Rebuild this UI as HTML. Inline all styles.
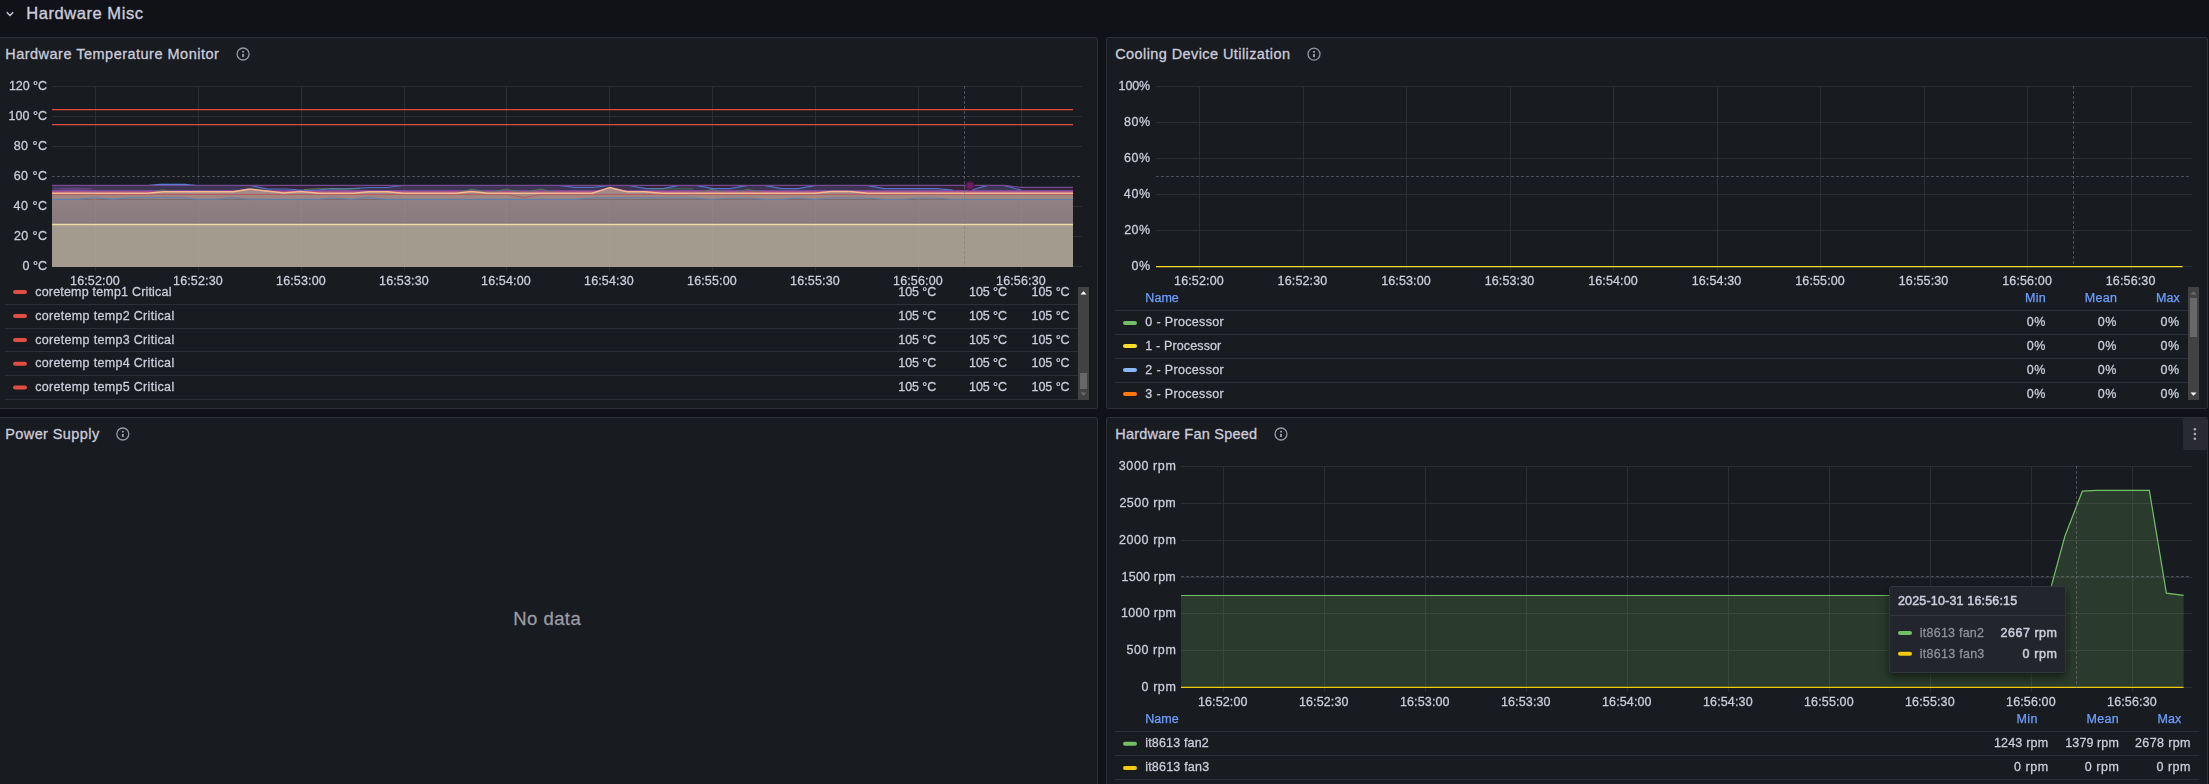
<!DOCTYPE html>
<html><head><meta charset="utf-8"><title>Hardware Misc</title>
<style>
html,body{margin:0;padding:0;background:#111217;}
body{width:2209px;height:784px;overflow:hidden;position:relative;font-family:"Liberation Sans", sans-serif;}
.panel{position:absolute;box-sizing:border-box;background:#181b1f;border:1px solid #2c2f35;border-radius:2px;}
.t{position:absolute;white-space:nowrap;line-height:20px;height:20px;font-family:"Liberation Sans", sans-serif;}
svg{position:absolute;left:0;top:0;}
.g{position:absolute;left:0;top:0;width:2209px;height:784px;will-change:transform;}
#tip{position:absolute;left:1889px;top:586px;width:177px;height:87px;box-sizing:border-box;background:#22252b;border:1px solid #34363d;border-radius:3px;box-shadow:0 4px 10px rgba(0,0,0,0.55);}
#tip i{position:absolute;left:0;right:0;top:28px;height:1px;background:#34363d;}
</style></head>
<body>
<div class="panel" style="left:-4px;top:37px;width:1102px;height:372px"></div>
<div class="panel" style="left:1106px;top:37px;width:1102px;height:372px"></div>
<div class="panel" style="left:-4px;top:417px;width:1102px;height:372px"></div>
<div class="panel" style="left:1106px;top:417px;width:1102px;height:372px"></div>
<svg width="2209" height="784" viewBox="0 0 2209 784">
<line x1="52" y1="86.5" x2="1082" y2="86.5" stroke="#2b2e33" stroke-width="1" shape-rendering="crispEdges"/>
<line x1="52" y1="116.5" x2="1082" y2="116.5" stroke="#2b2e33" stroke-width="1" shape-rendering="crispEdges"/>
<line x1="52" y1="146.5" x2="1082" y2="146.5" stroke="#2b2e33" stroke-width="1" shape-rendering="crispEdges"/>
<line x1="52" y1="206.5" x2="1082" y2="206.5" stroke="#2b2e33" stroke-width="1" shape-rendering="crispEdges"/>
<line x1="52" y1="236.5" x2="1082" y2="236.5" stroke="#2b2e33" stroke-width="1" shape-rendering="crispEdges"/>
<line x1="52" y1="266.5" x2="1082" y2="266.5" stroke="#2b2e33" stroke-width="1" shape-rendering="crispEdges"/>
<line x1="95.5" y1="86" x2="95.5" y2="271" stroke="#2b2e33" stroke-width="1" shape-rendering="crispEdges"/>
<line x1="198.5" y1="86" x2="198.5" y2="271" stroke="#2b2e33" stroke-width="1" shape-rendering="crispEdges"/>
<line x1="301.5" y1="86" x2="301.5" y2="271" stroke="#2b2e33" stroke-width="1" shape-rendering="crispEdges"/>
<line x1="404.5" y1="86" x2="404.5" y2="271" stroke="#2b2e33" stroke-width="1" shape-rendering="crispEdges"/>
<line x1="506.5" y1="86" x2="506.5" y2="271" stroke="#2b2e33" stroke-width="1" shape-rendering="crispEdges"/>
<line x1="609.5" y1="86" x2="609.5" y2="271" stroke="#2b2e33" stroke-width="1" shape-rendering="crispEdges"/>
<line x1="712.5" y1="86" x2="712.5" y2="271" stroke="#2b2e33" stroke-width="1" shape-rendering="crispEdges"/>
<line x1="815.5" y1="86" x2="815.5" y2="271" stroke="#2b2e33" stroke-width="1" shape-rendering="crispEdges"/>
<line x1="918.5" y1="86" x2="918.5" y2="271" stroke="#2b2e33" stroke-width="1" shape-rendering="crispEdges"/>
<line x1="1021.5" y1="86" x2="1021.5" y2="271" stroke="#2b2e33" stroke-width="1" shape-rendering="crispEdges"/>
<line x1="1156" y1="86.5" x2="2192" y2="86.5" stroke="#2b2e33" stroke-width="1" shape-rendering="crispEdges"/>
<line x1="1156" y1="122.5" x2="2192" y2="122.5" stroke="#2b2e33" stroke-width="1" shape-rendering="crispEdges"/>
<line x1="1156" y1="158.5" x2="2192" y2="158.5" stroke="#2b2e33" stroke-width="1" shape-rendering="crispEdges"/>
<line x1="1156" y1="194.5" x2="2192" y2="194.5" stroke="#2b2e33" stroke-width="1" shape-rendering="crispEdges"/>
<line x1="1156" y1="230.5" x2="2192" y2="230.5" stroke="#2b2e33" stroke-width="1" shape-rendering="crispEdges"/>
<line x1="1156" y1="266.5" x2="2192" y2="266.5" stroke="#2b2e33" stroke-width="1" shape-rendering="crispEdges"/>
<line x1="1199.5" y1="86" x2="1199.5" y2="271" stroke="#2b2e33" stroke-width="1" shape-rendering="crispEdges"/>
<line x1="1303.5" y1="86" x2="1303.5" y2="271" stroke="#2b2e33" stroke-width="1" shape-rendering="crispEdges"/>
<line x1="1406.5" y1="86" x2="1406.5" y2="271" stroke="#2b2e33" stroke-width="1" shape-rendering="crispEdges"/>
<line x1="1510.5" y1="86" x2="1510.5" y2="271" stroke="#2b2e33" stroke-width="1" shape-rendering="crispEdges"/>
<line x1="1613.5" y1="86" x2="1613.5" y2="271" stroke="#2b2e33" stroke-width="1" shape-rendering="crispEdges"/>
<line x1="1717.5" y1="86" x2="1717.5" y2="271" stroke="#2b2e33" stroke-width="1" shape-rendering="crispEdges"/>
<line x1="1820.5" y1="86" x2="1820.5" y2="271" stroke="#2b2e33" stroke-width="1" shape-rendering="crispEdges"/>
<line x1="1924.5" y1="86" x2="1924.5" y2="271" stroke="#2b2e33" stroke-width="1" shape-rendering="crispEdges"/>
<line x1="2027.5" y1="86" x2="2027.5" y2="271" stroke="#2b2e33" stroke-width="1" shape-rendering="crispEdges"/>
<line x1="2131.5" y1="86" x2="2131.5" y2="271" stroke="#2b2e33" stroke-width="1" shape-rendering="crispEdges"/>
<line x1="1181" y1="466.5" x2="2192" y2="466.5" stroke="#2b2e33" stroke-width="1" shape-rendering="crispEdges"/>
<line x1="1181" y1="503.5" x2="2192" y2="503.5" stroke="#2b2e33" stroke-width="1" shape-rendering="crispEdges"/>
<line x1="1181" y1="540.5" x2="2192" y2="540.5" stroke="#2b2e33" stroke-width="1" shape-rendering="crispEdges"/>
<line x1="1181" y1="577.5" x2="2192" y2="577.5" stroke="#2b2e33" stroke-width="1" shape-rendering="crispEdges"/>
<line x1="1181" y1="613.5" x2="2192" y2="613.5" stroke="#2b2e33" stroke-width="1" shape-rendering="crispEdges"/>
<line x1="1181" y1="650.5" x2="2192" y2="650.5" stroke="#2b2e33" stroke-width="1" shape-rendering="crispEdges"/>
<line x1="1181" y1="687.5" x2="2192" y2="687.5" stroke="#2b2e33" stroke-width="1" shape-rendering="crispEdges"/>
<line x1="1223.5" y1="466" x2="1223.5" y2="692" stroke="#2b2e33" stroke-width="1" shape-rendering="crispEdges"/>
<line x1="1324.5" y1="466" x2="1324.5" y2="692" stroke="#2b2e33" stroke-width="1" shape-rendering="crispEdges"/>
<line x1="1425.5" y1="466" x2="1425.5" y2="692" stroke="#2b2e33" stroke-width="1" shape-rendering="crispEdges"/>
<line x1="1526.5" y1="466" x2="1526.5" y2="692" stroke="#2b2e33" stroke-width="1" shape-rendering="crispEdges"/>
<line x1="1627.5" y1="466" x2="1627.5" y2="692" stroke="#2b2e33" stroke-width="1" shape-rendering="crispEdges"/>
<line x1="1728.5" y1="466" x2="1728.5" y2="692" stroke="#2b2e33" stroke-width="1" shape-rendering="crispEdges"/>
<line x1="1829.5" y1="466" x2="1829.5" y2="692" stroke="#2b2e33" stroke-width="1" shape-rendering="crispEdges"/>
<line x1="1930.5" y1="466" x2="1930.5" y2="692" stroke="#2b2e33" stroke-width="1" shape-rendering="crispEdges"/>
<line x1="2031.5" y1="466" x2="2031.5" y2="692" stroke="#2b2e33" stroke-width="1" shape-rendering="crispEdges"/>
<line x1="2132.5" y1="466" x2="2132.5" y2="692" stroke="#2b2e33" stroke-width="1" shape-rendering="crispEdges"/>
<defs><linearGradient id="g1" x1="0" y1="0" x2="0" y2="1"><stop offset="0" stop-color="#908083"/><stop offset="1" stop-color="#887a7f"/></linearGradient></defs>
<polygon points="52,185 1004.6,185 1021,187 1073,187 1073,191 52,191" fill="#36223b"/>
<polygon points="52,185.5 148,185.5 160,184.4 185,184.4 196.5,185.5 251,185.8 267.5,188.9 286.5,189 300,190 318,190 332,188.6 344.7,188.9 370,187.5 386.5,187.5 403,185.5 559,185.5 575.3,187.4 593,187.4 609.6,185.5 628.5,185.5 646.2,188.6 662.7,188.6 678,185.6 697,185.6 713.4,188.6 729.9,188.6 746.3,185.6 765.4,185.6 781.8,188.6 798.3,188.6 814.8,185.6 867.8,185.6 884.5,188.6 936.2,188.6 952.7,190 971.7,190 987,185.6 1004.6,185.6 1021,190 1073,190 1073,191 52,191" fill="#3e3456"/>
<rect x="52" y="190" width="1021" height="1" fill="#7a4a94"/>
<rect x="52" y="191" width="1021" height="1" fill="#a8528e"/>
<rect x="52" y="192" width="1021" height="1.2" fill="#9a5290"/>
<rect x="52" y="193" width="1021" height="6.5" fill="#a08581"/>
<rect x="52" y="199.4" width="1021" height="25.6" fill="url(#g1)"/>
<rect x="52" y="224.5" width="1021" height="42.5" fill="#a39b8d"/>
<line x1="95.5" y1="186" x2="95.5" y2="267" stroke="#ffffff" stroke-opacity="0.035" shape-rendering="crispEdges"/>
<line x1="198.5" y1="186" x2="198.5" y2="267" stroke="#ffffff" stroke-opacity="0.035" shape-rendering="crispEdges"/>
<line x1="301.5" y1="186" x2="301.5" y2="267" stroke="#ffffff" stroke-opacity="0.035" shape-rendering="crispEdges"/>
<line x1="404.5" y1="186" x2="404.5" y2="267" stroke="#ffffff" stroke-opacity="0.035" shape-rendering="crispEdges"/>
<line x1="506.5" y1="186" x2="506.5" y2="267" stroke="#ffffff" stroke-opacity="0.035" shape-rendering="crispEdges"/>
<line x1="609.5" y1="186" x2="609.5" y2="267" stroke="#ffffff" stroke-opacity="0.035" shape-rendering="crispEdges"/>
<line x1="712.5" y1="186" x2="712.5" y2="267" stroke="#ffffff" stroke-opacity="0.035" shape-rendering="crispEdges"/>
<line x1="815.5" y1="186" x2="815.5" y2="267" stroke="#ffffff" stroke-opacity="0.035" shape-rendering="crispEdges"/>
<line x1="918.5" y1="186" x2="918.5" y2="267" stroke="#ffffff" stroke-opacity="0.035" shape-rendering="crispEdges"/>
<line x1="1021.5" y1="186" x2="1021.5" y2="267" stroke="#ffffff" stroke-opacity="0.035" shape-rendering="crispEdges"/>
<line x1="52" y1="109.5" x2="1073" y2="109.5" stroke="#e24b3e" stroke-width="1.25"/>
<line x1="52" y1="124.5" x2="1073" y2="124.5" stroke="#e24b3e" stroke-width="1.25"/>
<ellipse cx="74" cy="188.8" rx="21" ry="1.1" fill="#7a4ea0" fill-opacity="0.6"/>
<polyline fill="none" stroke="#4f8ff0" stroke-width="1.2" stroke-opacity="1" stroke-linejoin="round" points="148,185.5 160,184.4 185,184.4 196.5,185.5"/>
<polyline fill="none" stroke="#5582e0" stroke-width="1.1" stroke-opacity="0.85" stroke-linejoin="round" points="251,185.8 267.5,188.9 286.5,189 300,190 318,190 332,188.6 344.7,188.9 370,187.5 386.5,187.5 403,185.5"/>
<polyline fill="none" stroke="#5582e0" stroke-width="1.1" stroke-opacity="0.85" stroke-linejoin="round" points="559,185.5 575.3,187.4 593,187.4 609.6,185.5"/>
<polyline fill="none" stroke="#5582e0" stroke-width="1.1" stroke-opacity="0.85" stroke-linejoin="round" points="628.5,185.5 646.2,188.6 662.7,188.6 678,185.6"/>
<polyline fill="none" stroke="#5582e0" stroke-width="1.1" stroke-opacity="0.85" stroke-linejoin="round" points="697,185.6 713.4,188.6 729.9,188.6 746.3,185.6"/>
<polyline fill="none" stroke="#5582e0" stroke-width="1.1" stroke-opacity="0.85" stroke-linejoin="round" points="765.4,185.6 781.8,188.6 798.3,188.6 814.8,185.6"/>
<polyline fill="none" stroke="#5582e0" stroke-width="1.1" stroke-opacity="0.85" stroke-linejoin="round" points="867.8,185.6 884.5,188.6 936.2,188.6 952.7,190"/>
<polyline fill="none" stroke="#5582e0" stroke-width="1.1" stroke-opacity="0.85" stroke-linejoin="round" points="971.7,190 987,185.6"/>
<polyline fill="none" stroke="#5582e0" stroke-width="1.1" stroke-opacity="0.85" stroke-linejoin="round" points="1004.6,185.6 1021,190"/>
<polyline fill="none" stroke="#74498f" stroke-width="1.1" stroke-opacity="1" stroke-linejoin="round" points="52,185.4 1004.6,185.4 1021,187.4 1073,187.4"/>
<polyline fill="none" stroke="#5a9a5a" stroke-width="1" stroke-opacity="0.7" stroke-linejoin="round" points="304,189.6 318,188.6 345,189.2 360,188.6"/>
<polyline fill="none" stroke="#4f8a4f" stroke-width="1" stroke-opacity="0.85" stroke-linejoin="round" points="458.7,192.6 472,189.1 489,192.8 506.3,189.1 523.4,192.8 541,189.1 555,192.8"/>
<polyline fill="none" stroke="#5a9a5a" stroke-width="1" stroke-opacity="0.5" stroke-linejoin="round" points="650,188.8 693,188.9"/>
<polyline fill="none" stroke="#4f8a4f" stroke-width="1" stroke-opacity="0.85" stroke-linejoin="round" points="700.7,192.6 712,189.3 723.5,192.6"/>
<polyline fill="none" stroke="#4f8a4f" stroke-width="1" stroke-opacity="0.85" stroke-linejoin="round" points="736.2,192.6 747.6,189.3 761.6,192.6"/>
<polyline fill="none" stroke="#4f8a4f" stroke-width="1" stroke-opacity="0.7" stroke-linejoin="round" points="155,191.2 163.5,189.9 170,191.4"/>
<polyline fill="none" stroke="#b25658" stroke-width="1" stroke-opacity="0.9" stroke-linejoin="round" points="52,194.4 507,194.4 524,197.5 541,194.4 1073,194.4"/>
<polygon points="52,193.3 147,193.3 163.5,191.7 233,191.7 249.7,189.1 284,193.0 300.4,191.5 319.4,193.3 353.5,193.3 368.8,191.7 387.8,191.7 403,193.3 456.2,193.3 471.4,191.5 488,193.3 591.8,193.3 609.6,187.6 627.2,191.7 645,191.7 661.4,193.3 814.8,193.3 831.3,191.5 850.3,191.5 868,193.3 1073,193.3 1073,193.6 52,193.6" fill="#a58a8b"/>
<polyline fill="none" stroke="#fbb88e" stroke-width="1.5" stroke-opacity="1" stroke-linejoin="round" points="52,193.3 147,193.3 163.5,191.7 233,191.7 249.7,189.1 284,193.0 300.4,191.5 319.4,193.3 353.5,193.3 368.8,191.7 387.8,191.7 403,193.3 456.2,193.3 471.4,191.5 488,193.3 591.8,193.3 609.6,187.6 627.2,191.7 645,191.7 661.4,193.3 814.8,193.3 831.3,191.5 850.3,191.5 868,193.3 1073,193.3"/>
<polyline fill="none" stroke="#5f7fa8" stroke-width="1.1" stroke-opacity="0.9" stroke-linejoin="round" points="52,199.4 78,199.4 95,197.5 113,199.4 130.6,197.6 181,197.6 197.8,199.4 215.5,199.4 232,197.6 249.7,199.4 319.4,199.4 332,198 352,199.4 368.8,197.6 386.5,199.4 576.6,199.4 593,197.9 693,197.9 712,199.5 730,198 747.6,198 765.4,199.5 781.8,199.5 798.3,198 814.8,199.5 832.3,198 867.8,198 884.5,199.5 902,199.5 918.5,198 936.2,198 952.7,199.5 1073,199.5"/>
<line x1="52" y1="224.4" x2="1073" y2="224.4" stroke="#ebdca2" stroke-width="1.5"/>
<line x1="52" y1="176.5" x2="1081" y2="176.5" stroke="rgb(120,120,130)" stroke-width="1" stroke-dasharray="3,2" shape-rendering="crispEdges" stroke-opacity="0.55"/>
<line x1="964.5" y1="86" x2="964.5" y2="267" stroke="rgb(120,120,130)" stroke-width="1" stroke-dasharray="3,2" shape-rendering="crispEdges" stroke-opacity="0.55"/>
<circle cx="970" cy="185.8" r="4.6" fill="#4a1d48"/>
<circle cx="970" cy="185.8" r="3.0" fill="#701d66"/>
<line x1="1156" y1="176.5" x2="2191" y2="176.5" stroke="rgb(120,120,130)" stroke-width="1" stroke-dasharray="3,2" shape-rendering="crispEdges" stroke-opacity="0.55"/>
<line x1="2073.5" y1="86" x2="2073.5" y2="267" stroke="rgb(120,120,130)" stroke-width="1" stroke-dasharray="3,2" shape-rendering="crispEdges" stroke-opacity="0.55"/>
<line x1="1156" y1="266.6" x2="2182.5" y2="266.6" stroke="#fade2a" stroke-width="1.35"/>
<path d="M1181,595.5 L2048.8,595.5 L2064.8,536.5 L2082.3,491.2 L2097,490.3 L2149.3,490.3 L2166.4,593.1 L2183.6,595.3 L2183.6,687.5 L1181,687.5 Z" fill="#73bf69" fill-opacity="0.2"/>
<path d="M1181,595.5 L2048.8,595.5 L2064.8,536.5 L2082.3,491.2 L2097,490.3 L2149.3,490.3 L2166.4,593.1 L2183.6,595.3" fill="none" stroke="#73bf69" stroke-width="1.2"/>
<line x1="1181" y1="687.4" x2="2183.6" y2="687.4" stroke="#f2cc0c" stroke-width="1.35"/>
<line x1="1181" y1="576.5" x2="2191" y2="576.5" stroke="rgb(120,120,130)" stroke-width="1" stroke-dasharray="3,2" shape-rendering="crispEdges" stroke-opacity="0.55"/>
<line x1="2076.5" y1="466" x2="2076.5" y2="688" stroke="rgb(120,120,130)" stroke-width="1" stroke-dasharray="3,2" shape-rendering="crispEdges" stroke-opacity="0.55"/>
<line x1="5" y1="304.5" x2="1078" y2="304.5" stroke="#2c2f35" stroke-width="1" shape-rendering="crispEdges"/>
<line x1="5" y1="328.5" x2="1078" y2="328.5" stroke="#2c2f35" stroke-width="1" shape-rendering="crispEdges"/>
<line x1="5" y1="351.5" x2="1078" y2="351.5" stroke="#2c2f35" stroke-width="1" shape-rendering="crispEdges"/>
<line x1="5" y1="375.5" x2="1078" y2="375.5" stroke="#2c2f35" stroke-width="1" shape-rendering="crispEdges"/>
<line x1="5" y1="399.5" x2="1078" y2="399.5" stroke="#2c2f35" stroke-width="1" shape-rendering="crispEdges"/>
<line x1="1115" y1="310.5" x2="2188" y2="310.5" stroke="#2c2f35" stroke-width="1" shape-rendering="crispEdges"/>
<line x1="1115" y1="334.5" x2="2188" y2="334.5" stroke="#2c2f35" stroke-width="1" shape-rendering="crispEdges"/>
<line x1="1115" y1="358.5" x2="2188" y2="358.5" stroke="#2c2f35" stroke-width="1" shape-rendering="crispEdges"/>
<line x1="1115" y1="382.5" x2="2188" y2="382.5" stroke="#2c2f35" stroke-width="1" shape-rendering="crispEdges"/>
<line x1="1115" y1="731.5" x2="2199" y2="731.5" stroke="#2c2f35" stroke-width="1" shape-rendering="crispEdges"/>
<line x1="1115" y1="755.5" x2="2199" y2="755.5" stroke="#2c2f35" stroke-width="1" shape-rendering="crispEdges"/>
<line x1="1115" y1="779.5" x2="2199" y2="779.5" stroke="#2c2f35" stroke-width="1" shape-rendering="crispEdges"/>
<rect x="13" y="290.0" width="14" height="4" rx="2" fill="#e24d42"/>
<rect x="13" y="314.0" width="14" height="4" rx="2" fill="#e24d42"/>
<rect x="13" y="338.0" width="14" height="4" rx="2" fill="#e24d42"/>
<rect x="13" y="361.7" width="14" height="4" rx="2" fill="#e24d42"/>
<rect x="13" y="385.6" width="14" height="4" rx="2" fill="#e24d42"/>
<rect x="1123" y="321.0" width="14" height="4" rx="2" fill="#73bf69"/>
<rect x="1123" y="344.0" width="14" height="4" rx="2" fill="#fade2a"/>
<rect x="1123" y="368.0" width="14" height="4" rx="2" fill="#8ab8ff"/>
<rect x="1123" y="392.0" width="14" height="4" rx="2" fill="#ff780a"/>
<rect x="1123" y="741.8" width="14" height="4" rx="2" fill="#73bf69"/>
<rect x="1123" y="766.0" width="14" height="4" rx="2" fill="#f2cc0c"/>
<circle cx="243.1" cy="54" r="6" fill="none" stroke="#9697a4" stroke-width="1.3"/>
<rect x="242.1" y="53.9" width="2" height="3.1" fill="#9697a4"/><rect x="242.1" y="50.9" width="2" height="1.6" fill="#9697a4"/>
<circle cx="1314" cy="54.1" r="6" fill="none" stroke="#9697a4" stroke-width="1.3"/>
<rect x="1313" y="54.0" width="2" height="3.1" fill="#9697a4"/><rect x="1313" y="51.0" width="2" height="1.6" fill="#9697a4"/>
<circle cx="122.8" cy="434" r="6" fill="none" stroke="#9697a4" stroke-width="1.3"/>
<rect x="121.8" y="433.9" width="2" height="3.1" fill="#9697a4"/><rect x="121.8" y="430.9" width="2" height="1.6" fill="#9697a4"/>
<circle cx="1281" cy="434" r="6" fill="none" stroke="#9697a4" stroke-width="1.3"/>
<rect x="1280" y="433.9" width="2" height="3.1" fill="#9697a4"/><rect x="1280" y="430.9" width="2" height="1.6" fill="#9697a4"/>
<polyline points="6.8,12.3 10,15.5 13.2,12.3" fill="none" stroke="#ccccdc" stroke-width="1.5"/>
<rect x="1078" y="287" width="11" height="113" fill="#424242"/>
<rect x="1080" y="373" width="7" height="16" fill="#686868"/>
<path d="M1080.5,294.5 L1086.5,294.5 L1083.5,291.2 Z" fill="#ffffff"/>
<path d="M1080.5,392.5 L1086.5,392.5 L1083.5,395.8 Z" fill="#6b6b6b"/>
<rect x="2188" y="287" width="11" height="113" fill="#424242"/>
<rect x="2190" y="298" width="7" height="39" fill="#686868"/>
<path d="M2190.5,294.5 L2196.5,294.5 L2193.5,291.2 Z" fill="#6b6b6b"/>
<path d="M2190.5,392.5 L2196.5,392.5 L2193.5,395.8 Z" fill="#ffffff"/>
<rect x="2183" y="418" width="24" height="32" rx="2" fill="#2a2b32"/>
<circle cx="2194.9" cy="429.3" r="1.3" fill="#a9aab8"/>
<circle cx="2194.9" cy="434" r="1.3" fill="#a9aab8"/>
<circle cx="2194.9" cy="438.7" r="1.3" fill="#a9aab8"/>
</svg>
<span class="t" style="left:26.20px;top:2.90px;font-size:16.5px;letter-spacing:0.564px;color:#ccccdc;-webkit-text-stroke:0.35px #ccccdc;">Hardware Misc</span>
<span class="t" style="left:5.20px;top:44.30px;font-size:14.5px;letter-spacing:0.489px;color:#ccccdc;-webkit-text-stroke:0.3px #ccccdc;">Hardware Temperature Monitor</span>
<span class="t" style="left:1115.20px;top:44.30px;font-size:14.5px;letter-spacing:0.415px;color:#ccccdc;-webkit-text-stroke:0.3px #ccccdc;">Cooling Device Utilization</span>
<span class="t" style="left:5.20px;top:424.30px;font-size:14.5px;letter-spacing:0.412px;color:#ccccdc;-webkit-text-stroke:0.3px #ccccdc;">Power Supply</span>
<span class="t" style="left:1115.20px;top:424.30px;font-size:14.5px;letter-spacing:0.245px;color:#ccccdc;-webkit-text-stroke:0.3px #ccccdc;">Hardware Fan Speed</span>
<span class="t" style="left:513.25px;top:609.00px;font-size:18.5px;letter-spacing:0.451px;color:#9a9ca7;-webkit-text-stroke:0.28px #9a9ca7;">No data</span>
<div class="g">
<span class="t" style="left:8.90px;top:76.00px;font-size:12.5px;letter-spacing:-0.052px;color:#ccccdc;-webkit-text-stroke:0.28px #ccccdc;">120 °C</span>
<span class="t" style="left:8.40px;top:106.00px;font-size:12.5px;letter-spacing:0.048px;color:#ccccdc;-webkit-text-stroke:0.28px #ccccdc;">100 °C</span>
<span class="t" style="left:13.70px;top:136.00px;font-size:12.5px;letter-spacing:0.473px;color:#ccccdc;-webkit-text-stroke:0.28px #ccccdc;">80 °C</span>
<span class="t" style="left:13.70px;top:166.00px;font-size:12.5px;letter-spacing:0.473px;color:#ccccdc;-webkit-text-stroke:0.28px #ccccdc;">60 °C</span>
<span class="t" style="left:13.60px;top:196.00px;font-size:12.5px;letter-spacing:0.498px;color:#ccccdc;-webkit-text-stroke:0.28px #ccccdc;">40 °C</span>
<span class="t" style="left:14.00px;top:226.00px;font-size:12.5px;letter-spacing:0.398px;color:#ccccdc;-webkit-text-stroke:0.28px #ccccdc;">20 °C</span>
<span class="t" style="left:22.40px;top:256.00px;font-size:12.5px;letter-spacing:0.049px;color:#ccccdc;-webkit-text-stroke:0.28px #ccccdc;">0 °C</span>
<span class="t" style="left:70.10px;top:270.70px;font-size:12.5px;letter-spacing:0.133px;color:#ccccdc;-webkit-text-stroke:0.28px #ccccdc;">16:52:00</span>
<span class="t" style="left:173.10px;top:270.70px;font-size:12.5px;letter-spacing:0.133px;color:#ccccdc;-webkit-text-stroke:0.28px #ccccdc;">16:52:30</span>
<span class="t" style="left:276.10px;top:270.70px;font-size:12.5px;letter-spacing:0.133px;color:#ccccdc;-webkit-text-stroke:0.28px #ccccdc;">16:53:00</span>
<span class="t" style="left:379.10px;top:270.70px;font-size:12.5px;letter-spacing:0.133px;color:#ccccdc;-webkit-text-stroke:0.28px #ccccdc;">16:53:30</span>
<span class="t" style="left:481.10px;top:270.70px;font-size:12.5px;letter-spacing:0.133px;color:#ccccdc;-webkit-text-stroke:0.28px #ccccdc;">16:54:00</span>
<span class="t" style="left:584.10px;top:270.70px;font-size:12.5px;letter-spacing:0.133px;color:#ccccdc;-webkit-text-stroke:0.28px #ccccdc;">16:54:30</span>
<span class="t" style="left:687.10px;top:270.70px;font-size:12.5px;letter-spacing:0.133px;color:#ccccdc;-webkit-text-stroke:0.28px #ccccdc;">16:55:00</span>
<span class="t" style="left:790.10px;top:270.70px;font-size:12.5px;letter-spacing:0.133px;color:#ccccdc;-webkit-text-stroke:0.28px #ccccdc;">16:55:30</span>
<span class="t" style="left:893.10px;top:270.70px;font-size:12.5px;letter-spacing:0.133px;color:#ccccdc;-webkit-text-stroke:0.28px #ccccdc;">16:56:00</span>
<span class="t" style="left:996.10px;top:270.70px;font-size:12.5px;letter-spacing:0.133px;color:#ccccdc;-webkit-text-stroke:0.28px #ccccdc;">16:56:30</span>
<span class="t" style="left:35.20px;top:282.00px;font-size:12.5px;letter-spacing:0.195px;color:#ccccdc;-webkit-text-stroke:0.28px #ccccdc;">coretemp temp1 Critical</span>
<span class="t" style="left:898.30px;top:282.00px;font-size:12.5px;letter-spacing:-0.072px;color:#ccccdc;-webkit-text-stroke:0.28px #ccccdc;">105 °C</span>
<span class="t" style="left:969.00px;top:282.00px;font-size:12.5px;letter-spacing:-0.072px;color:#ccccdc;-webkit-text-stroke:0.28px #ccccdc;">105 °C</span>
<span class="t" style="left:1031.60px;top:282.00px;font-size:12.5px;letter-spacing:-0.072px;color:#ccccdc;-webkit-text-stroke:0.28px #ccccdc;">105 °C</span>
<span class="t" style="left:35.20px;top:306.00px;font-size:12.5px;letter-spacing:0.318px;color:#ccccdc;-webkit-text-stroke:0.28px #ccccdc;">coretemp temp2 Critical</span>
<span class="t" style="left:898.30px;top:306.00px;font-size:12.5px;letter-spacing:-0.072px;color:#ccccdc;-webkit-text-stroke:0.28px #ccccdc;">105 °C</span>
<span class="t" style="left:969.00px;top:306.00px;font-size:12.5px;letter-spacing:-0.072px;color:#ccccdc;-webkit-text-stroke:0.28px #ccccdc;">105 °C</span>
<span class="t" style="left:1031.60px;top:306.00px;font-size:12.5px;letter-spacing:-0.072px;color:#ccccdc;-webkit-text-stroke:0.28px #ccccdc;">105 °C</span>
<span class="t" style="left:35.20px;top:330.00px;font-size:12.5px;letter-spacing:0.318px;color:#ccccdc;-webkit-text-stroke:0.28px #ccccdc;">coretemp temp3 Critical</span>
<span class="t" style="left:898.30px;top:330.00px;font-size:12.5px;letter-spacing:-0.072px;color:#ccccdc;-webkit-text-stroke:0.28px #ccccdc;">105 °C</span>
<span class="t" style="left:969.00px;top:330.00px;font-size:12.5px;letter-spacing:-0.072px;color:#ccccdc;-webkit-text-stroke:0.28px #ccccdc;">105 °C</span>
<span class="t" style="left:1031.60px;top:330.00px;font-size:12.5px;letter-spacing:-0.072px;color:#ccccdc;-webkit-text-stroke:0.28px #ccccdc;">105 °C</span>
<span class="t" style="left:35.20px;top:352.80px;font-size:12.5px;letter-spacing:0.318px;color:#ccccdc;-webkit-text-stroke:0.28px #ccccdc;">coretemp temp4 Critical</span>
<span class="t" style="left:898.30px;top:352.80px;font-size:12.5px;letter-spacing:-0.072px;color:#ccccdc;-webkit-text-stroke:0.28px #ccccdc;">105 °C</span>
<span class="t" style="left:969.00px;top:352.80px;font-size:12.5px;letter-spacing:-0.072px;color:#ccccdc;-webkit-text-stroke:0.28px #ccccdc;">105 °C</span>
<span class="t" style="left:1031.60px;top:352.80px;font-size:12.5px;letter-spacing:-0.072px;color:#ccccdc;-webkit-text-stroke:0.28px #ccccdc;">105 °C</span>
<span class="t" style="left:35.20px;top:376.70px;font-size:12.5px;letter-spacing:0.318px;color:#ccccdc;-webkit-text-stroke:0.28px #ccccdc;">coretemp temp5 Critical</span>
<span class="t" style="left:898.30px;top:376.70px;font-size:12.5px;letter-spacing:-0.072px;color:#ccccdc;-webkit-text-stroke:0.28px #ccccdc;">105 °C</span>
<span class="t" style="left:969.00px;top:376.70px;font-size:12.5px;letter-spacing:-0.072px;color:#ccccdc;-webkit-text-stroke:0.28px #ccccdc;">105 °C</span>
<span class="t" style="left:1031.60px;top:376.70px;font-size:12.5px;letter-spacing:-0.072px;color:#ccccdc;-webkit-text-stroke:0.28px #ccccdc;">105 °C</span>
<span class="t" style="left:1118.60px;top:76.00px;font-size:12.5px;letter-spacing:-0.128px;color:#ccccdc;-webkit-text-stroke:0.28px #ccccdc;">100%</span>
<span class="t" style="left:1123.90px;top:112.00px;font-size:12.5px;letter-spacing:0.634px;color:#ccccdc;-webkit-text-stroke:0.28px #ccccdc;">80%</span>
<span class="t" style="left:1123.90px;top:148.00px;font-size:12.5px;letter-spacing:0.634px;color:#ccccdc;-webkit-text-stroke:0.28px #ccccdc;">60%</span>
<span class="t" style="left:1123.80px;top:184.00px;font-size:12.5px;letter-spacing:0.684px;color:#ccccdc;-webkit-text-stroke:0.28px #ccccdc;">40%</span>
<span class="t" style="left:1124.20px;top:220.00px;font-size:12.5px;letter-spacing:0.484px;color:#ccccdc;-webkit-text-stroke:0.28px #ccccdc;">20%</span>
<span class="t" style="left:1131.40px;top:256.00px;font-size:12.5px;letter-spacing:0.722px;color:#ccccdc;-webkit-text-stroke:0.28px #ccccdc;">0%</span>
<span class="t" style="left:1174.10px;top:270.70px;font-size:12.5px;letter-spacing:0.133px;color:#ccccdc;-webkit-text-stroke:0.28px #ccccdc;">16:52:00</span>
<span class="t" style="left:1277.62px;top:270.70px;font-size:12.5px;letter-spacing:0.133px;color:#ccccdc;-webkit-text-stroke:0.28px #ccccdc;">16:52:30</span>
<span class="t" style="left:1381.14px;top:270.70px;font-size:12.5px;letter-spacing:0.133px;color:#ccccdc;-webkit-text-stroke:0.28px #ccccdc;">16:53:00</span>
<span class="t" style="left:1484.66px;top:270.70px;font-size:12.5px;letter-spacing:0.133px;color:#ccccdc;-webkit-text-stroke:0.28px #ccccdc;">16:53:30</span>
<span class="t" style="left:1588.18px;top:270.70px;font-size:12.5px;letter-spacing:0.133px;color:#ccccdc;-webkit-text-stroke:0.28px #ccccdc;">16:54:00</span>
<span class="t" style="left:1691.70px;top:270.70px;font-size:12.5px;letter-spacing:0.133px;color:#ccccdc;-webkit-text-stroke:0.28px #ccccdc;">16:54:30</span>
<span class="t" style="left:1795.22px;top:270.70px;font-size:12.5px;letter-spacing:0.133px;color:#ccccdc;-webkit-text-stroke:0.28px #ccccdc;">16:55:00</span>
<span class="t" style="left:1898.74px;top:270.70px;font-size:12.5px;letter-spacing:0.133px;color:#ccccdc;-webkit-text-stroke:0.28px #ccccdc;">16:55:30</span>
<span class="t" style="left:2002.26px;top:270.70px;font-size:12.5px;letter-spacing:0.133px;color:#ccccdc;-webkit-text-stroke:0.28px #ccccdc;">16:56:00</span>
<span class="t" style="left:2105.78px;top:270.70px;font-size:12.5px;letter-spacing:0.133px;color:#ccccdc;-webkit-text-stroke:0.28px #ccccdc;">16:56:30</span>
<span class="t" style="left:1145.30px;top:288.00px;font-size:12.5px;letter-spacing:0.052px;color:#6e9fff;-webkit-text-stroke:0.25px #6e9fff;">Name</span>
<span class="t" style="left:2024.90px;top:288.00px;font-size:12.5px;letter-spacing:0.372px;color:#6e9fff;-webkit-text-stroke:0.25px #6e9fff;">Min</span>
<span class="t" style="left:2084.70px;top:288.00px;font-size:12.5px;letter-spacing:0.306px;color:#6e9fff;-webkit-text-stroke:0.25px #6e9fff;">Mean</span>
<span class="t" style="left:2155.90px;top:288.00px;font-size:12.5px;letter-spacing:0.088px;color:#6e9fff;-webkit-text-stroke:0.25px #6e9fff;">Max</span>
<span class="t" style="left:1145.30px;top:312.00px;font-size:12.5px;letter-spacing:0.338px;color:#ccccdc;-webkit-text-stroke:0.28px #ccccdc;">0 - Processor</span>
<span class="t" style="left:2026.70px;top:312.00px;font-size:12.5px;letter-spacing:0.622px;color:#ccccdc;-webkit-text-stroke:0.28px #ccccdc;">0%</span>
<span class="t" style="left:2097.80px;top:312.00px;font-size:12.5px;letter-spacing:0.622px;color:#ccccdc;-webkit-text-stroke:0.28px #ccccdc;">0%</span>
<span class="t" style="left:2160.50px;top:312.00px;font-size:12.5px;letter-spacing:0.622px;color:#ccccdc;-webkit-text-stroke:0.28px #ccccdc;">0%</span>
<span class="t" style="left:1145.30px;top:336.00px;font-size:12.5px;letter-spacing:0.138px;color:#ccccdc;-webkit-text-stroke:0.28px #ccccdc;">1 - Processor</span>
<span class="t" style="left:2026.70px;top:336.00px;font-size:12.5px;letter-spacing:0.622px;color:#ccccdc;-webkit-text-stroke:0.28px #ccccdc;">0%</span>
<span class="t" style="left:2097.80px;top:336.00px;font-size:12.5px;letter-spacing:0.622px;color:#ccccdc;-webkit-text-stroke:0.28px #ccccdc;">0%</span>
<span class="t" style="left:2160.50px;top:336.00px;font-size:12.5px;letter-spacing:0.622px;color:#ccccdc;-webkit-text-stroke:0.28px #ccccdc;">0%</span>
<span class="t" style="left:1145.30px;top:359.80px;font-size:12.5px;letter-spacing:0.338px;color:#ccccdc;-webkit-text-stroke:0.28px #ccccdc;">2 - Processor</span>
<span class="t" style="left:2026.70px;top:359.80px;font-size:12.5px;letter-spacing:0.622px;color:#ccccdc;-webkit-text-stroke:0.28px #ccccdc;">0%</span>
<span class="t" style="left:2097.80px;top:359.80px;font-size:12.5px;letter-spacing:0.622px;color:#ccccdc;-webkit-text-stroke:0.28px #ccccdc;">0%</span>
<span class="t" style="left:2160.50px;top:359.80px;font-size:12.5px;letter-spacing:0.622px;color:#ccccdc;-webkit-text-stroke:0.28px #ccccdc;">0%</span>
<span class="t" style="left:1145.30px;top:383.70px;font-size:12.5px;letter-spacing:0.338px;color:#ccccdc;-webkit-text-stroke:0.28px #ccccdc;">3 - Processor</span>
<span class="t" style="left:2026.70px;top:383.70px;font-size:12.5px;letter-spacing:0.622px;color:#ccccdc;-webkit-text-stroke:0.28px #ccccdc;">0%</span>
<span class="t" style="left:2097.80px;top:383.70px;font-size:12.5px;letter-spacing:0.622px;color:#ccccdc;-webkit-text-stroke:0.28px #ccccdc;">0%</span>
<span class="t" style="left:2160.50px;top:383.70px;font-size:12.5px;letter-spacing:0.622px;color:#ccccdc;-webkit-text-stroke:0.28px #ccccdc;">0%</span>
<span class="t" style="left:1118.80px;top:456.00px;font-size:12.5px;letter-spacing:0.598px;color:#ccccdc;-webkit-text-stroke:0.28px #ccccdc;">3000 rpm</span>
<span class="t" style="left:1119.40px;top:493.00px;font-size:12.5px;letter-spacing:0.512px;color:#ccccdc;-webkit-text-stroke:0.28px #ccccdc;">2500 rpm</span>
<span class="t" style="left:1119.00px;top:530.00px;font-size:12.5px;letter-spacing:0.570px;color:#ccccdc;-webkit-text-stroke:0.28px #ccccdc;">2000 rpm</span>
<span class="t" style="left:1121.60px;top:567.00px;font-size:12.5px;letter-spacing:0.198px;color:#ccccdc;-webkit-text-stroke:0.28px #ccccdc;">1500 rpm</span>
<span class="t" style="left:1121.00px;top:602.60px;font-size:12.5px;letter-spacing:0.284px;color:#ccccdc;-webkit-text-stroke:0.28px #ccccdc;">1000 rpm</span>
<span class="t" style="left:1126.50px;top:639.60px;font-size:12.5px;letter-spacing:0.573px;color:#ccccdc;-webkit-text-stroke:0.28px #ccccdc;">500 rpm</span>
<span class="t" style="left:1141.60px;top:677.30px;font-size:12.5px;letter-spacing:0.562px;color:#ccccdc;-webkit-text-stroke:0.28px #ccccdc;">0 rpm</span>
<span class="t" style="left:1197.90px;top:691.80px;font-size:12.5px;letter-spacing:0.133px;color:#ccccdc;-webkit-text-stroke:0.28px #ccccdc;">16:52:00</span>
<span class="t" style="left:1298.92px;top:691.80px;font-size:12.5px;letter-spacing:0.133px;color:#ccccdc;-webkit-text-stroke:0.28px #ccccdc;">16:52:30</span>
<span class="t" style="left:1399.94px;top:691.80px;font-size:12.5px;letter-spacing:0.133px;color:#ccccdc;-webkit-text-stroke:0.28px #ccccdc;">16:53:00</span>
<span class="t" style="left:1500.96px;top:691.80px;font-size:12.5px;letter-spacing:0.133px;color:#ccccdc;-webkit-text-stroke:0.28px #ccccdc;">16:53:30</span>
<span class="t" style="left:1601.98px;top:691.80px;font-size:12.5px;letter-spacing:0.133px;color:#ccccdc;-webkit-text-stroke:0.28px #ccccdc;">16:54:00</span>
<span class="t" style="left:1703.00px;top:691.80px;font-size:12.5px;letter-spacing:0.133px;color:#ccccdc;-webkit-text-stroke:0.28px #ccccdc;">16:54:30</span>
<span class="t" style="left:1804.02px;top:691.80px;font-size:12.5px;letter-spacing:0.133px;color:#ccccdc;-webkit-text-stroke:0.28px #ccccdc;">16:55:00</span>
<span class="t" style="left:1905.04px;top:691.80px;font-size:12.5px;letter-spacing:0.133px;color:#ccccdc;-webkit-text-stroke:0.28px #ccccdc;">16:55:30</span>
<span class="t" style="left:2006.06px;top:691.80px;font-size:12.5px;letter-spacing:0.133px;color:#ccccdc;-webkit-text-stroke:0.28px #ccccdc;">16:56:00</span>
<span class="t" style="left:2107.08px;top:691.80px;font-size:12.5px;letter-spacing:0.133px;color:#ccccdc;-webkit-text-stroke:0.28px #ccccdc;">16:56:30</span>
<span class="t" style="left:1145.20px;top:708.80px;font-size:12.5px;letter-spacing:0.052px;color:#6e9fff;-webkit-text-stroke:0.25px #6e9fff;">Name</span>
<span class="t" style="left:2016.50px;top:708.80px;font-size:12.5px;letter-spacing:0.372px;color:#6e9fff;-webkit-text-stroke:0.25px #6e9fff;">Min</span>
<span class="t" style="left:2086.50px;top:708.80px;font-size:12.5px;letter-spacing:0.306px;color:#6e9fff;-webkit-text-stroke:0.25px #6e9fff;">Mean</span>
<span class="t" style="left:2157.40px;top:708.80px;font-size:12.5px;letter-spacing:0.088px;color:#6e9fff;-webkit-text-stroke:0.25px #6e9fff;">Max</span>
<span class="t" style="left:1145.20px;top:732.80px;font-size:12.5px;letter-spacing:0.174px;color:#ccccdc;-webkit-text-stroke:0.28px #ccccdc;">it8613 fan2</span>
<span class="t" style="left:1145.20px;top:756.80px;font-size:12.5px;letter-spacing:0.204px;color:#ccccdc;-webkit-text-stroke:0.28px #ccccdc;">it8613 fan3</span>
<span class="t" style="left:1993.90px;top:732.80px;font-size:12.5px;letter-spacing:0.198px;color:#ccccdc;-webkit-text-stroke:0.28px #ccccdc;">1243 rpm</span>
<span class="t" style="left:2065.30px;top:732.80px;font-size:12.5px;letter-spacing:0.098px;color:#ccccdc;-webkit-text-stroke:0.28px #ccccdc;">1379 rpm</span>
<span class="t" style="left:2135.00px;top:732.80px;font-size:12.5px;letter-spacing:0.384px;color:#ccccdc;-webkit-text-stroke:0.28px #ccccdc;">2678 rpm</span>
<span class="t" style="left:2014.10px;top:756.80px;font-size:12.5px;letter-spacing:0.512px;color:#ccccdc;-webkit-text-stroke:0.28px #ccccdc;">0 rpm</span>
<span class="t" style="left:2084.80px;top:756.80px;font-size:12.5px;letter-spacing:0.512px;color:#ccccdc;-webkit-text-stroke:0.28px #ccccdc;">0 rpm</span>
<span class="t" style="left:2156.50px;top:756.80px;font-size:12.5px;letter-spacing:0.512px;color:#ccccdc;-webkit-text-stroke:0.28px #ccccdc;">0 rpm</span>
</div>
<div id="tip"><i></i></div>
<svg width="2209" height="784" viewBox="0 0 2209 784">
<rect x="1898" y="630.9" width="14" height="4" rx="2" fill="#73bf69"/>
<rect x="1898" y="651.7" width="14" height="4" rx="2" fill="#f2cc0c"/>
</svg>
<div class="g">
<span class="t" style="left:1898.00px;top:590.90px;font-size:12.5px;letter-spacing:0.173px;color:#ccccdc;-webkit-text-stroke:0.5px #ccccdc;">2025-10-31 16:56:15</span>
<span class="t" style="left:1919.80px;top:622.90px;font-size:12.5px;letter-spacing:0.234px;color:#8f919c;-webkit-text-stroke:0.28px #8f919c;">it8613 fan2</span>
<span class="t" style="left:1919.80px;top:643.90px;font-size:12.5px;letter-spacing:0.264px;color:#8f919c;-webkit-text-stroke:0.28px #8f919c;">it8613 fan3</span>
<span class="t" style="left:2000.60px;top:622.90px;font-size:12.5px;letter-spacing:0.512px;color:#ccccdc;-webkit-text-stroke:0.5px #ccccdc;">2667 rpm</span>
<span class="t" style="left:2022.60px;top:643.90px;font-size:12.5px;letter-spacing:0.612px;color:#ccccdc;-webkit-text-stroke:0.5px #ccccdc;">0 rpm</span>
</div>
</body></html>
